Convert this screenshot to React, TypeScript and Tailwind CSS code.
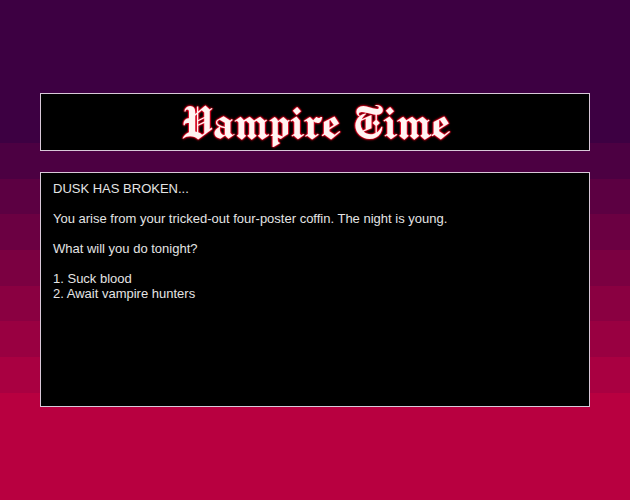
const choices = ["Suck blood", "Await vampire hunters"];

// dusk sky, top to bottom
const sky = [
  "bg-[#3d0042]",
  "bg-[#3d0042]",
  "bg-[#3d0042]",
  "bg-[#3d0042]",
  "bg-[#4c0042]",
  "bg-[#5c0042]",
  "bg-[#6b0042]",
  "bg-[#7b0041]",
  "bg-[#8a0041]",
  "bg-[#990041]",
  "bg-[#a90041]",
  "bg-[#b80040]",
  "bg-[#b80040]",
  "bg-[#b80040]",
];

const Sky = () => {
  return (
    <div aria-hidden="true" className="absolute inset-0 -z-10 flex flex-col bg-[#b80040]">
      {sky.map((color, i) => (
        <div key={i} className={`flex-1 ${color}`} />
      ))}
    </div>
  );
};

const Title = () => {
  return (
    <header className="border border-[#d8c8d8] bg-black py-1 text-center">
      {/* blackletter where the reader has one, plain serif otherwise */}
      <h1 className="font-['Old_English_Text_MT','Manufacturing_Consent','UnifrakturMaguntia','UnifrakturCook','Liberation_Serif',serif] text-[53px] leading-12 text-[#fff4f2] [text-shadow:-1px_0_1px_#e00020,1px_0_1px_#e00020,0_1px_2px_#c00018,0_-1px_2px_#c00018]">
        Vampire Time
      </h1>
    </header>
  );
};

export default function App() {
  return (
    <div className="relative isolate flex min-h-screen flex-col justify-center gap-[21px] px-10 font-['Liberation_Sans',sans-serif]">
      <Sky />
      <Title />

      {/* story text */}
      <main className="flex min-h-[235px] flex-col gap-[15px] border border-[#d8c8d8] bg-black px-3 py-2 text-[13px] leading-[15px] text-[#e4e4e4]">
        <p>DUSK HAS BROKEN...</p>
        <p>You arise from your tricked-out four-poster coffin. The night is young.</p>
        <p>What will you do tonight?</p>
        <ol>
          {choices.map((choice, i) => (
            <li key={choice}>
              {i + 1}. {choice}
            </li>
          ))}
        </ol>
      </main>
    </div>
  );
}
